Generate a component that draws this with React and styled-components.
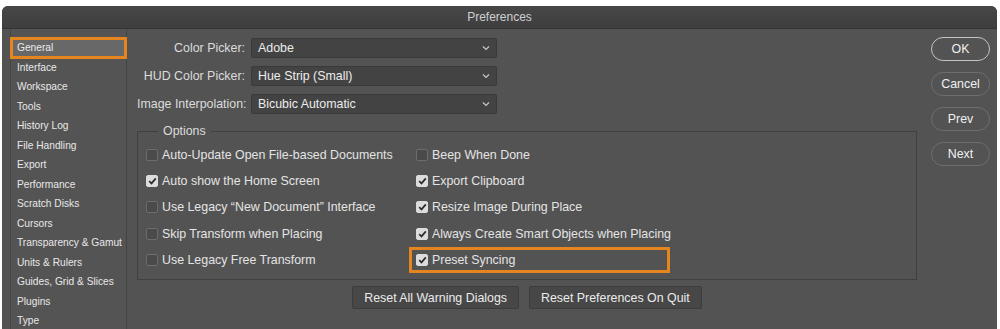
import React from 'react';
import styled, { createGlobalStyle } from 'styled-components';

const GlobalStyle = createGlobalStyle`
  html, body {
    margin: 0;
    padding: 0;
    background: #ffffff;
    font-family: 'Liberation Sans', Arial, sans-serif;
  }
`;

const ORANGE = '#e4861d';

/** 창 전체 — 상단 흰 여백 아래 둥근 다크 패널 */
const Window = styled.div`
  margin: 6px 3px 0 2px;
  height: 323px;
  background: #535353;
  border-radius: 6px 6px 0 0;
  display: flex;
  flex-direction: column;
  overflow: hidden;
  color: #e2e2e2;
`;

const TitleBar = styled.div`
  height: 22px;
  flex: none;
  background: linear-gradient(#474747, #3e3e3e);
  border-bottom: 1px solid #343434;
  display: flex;
  align-items: center;
  justify-content: center;
  font-size: 12px;
  color: #cfcfcf;
`;

const Body = styled.div`
  flex: 1;
  display: flex;
  min-height: 0;
`;

/** 왼쪽 카테고리 목록 */
const Sidebar = styled.ul`
  list-style: none;
  margin: 0 0 0 8px;
  padding: 9px 0 0 0;
  width: 117px;
  flex: none;
  border-left: 1px solid #464646;
  border-right: 1px solid #444444;
  box-sizing: border-box;
  background: #545454;
`;

const SideItem = styled.li`
  position: relative;
  height: 19.5px;
  line-height: 19.5px;
  padding-left: 6px;
  font-size: 10.2px;
  color: #e8e8e8;
  white-space: nowrap;
  background: ${({ $active }) => ($active ? '#686868' : 'transparent')};
  ${({ $active }) =>
    $active &&
    `
    &::after {
      content: '';
      position: absolute;
      left: -1px;
      right: -1px;
      top: -1px;
      bottom: -1px;
      border: 3px solid ${ORANGE};
    }
  `}
`;

const Main = styled.div`
  width: 789px;
  flex: none;
  padding: 9px 0 0 10px;
  box-sizing: border-box;
  display: flex;
  flex-direction: column;
`;

const FieldRows = styled.div`
  display: flex;
  flex-direction: column;
  gap: 8px;
`;

const FieldRow = styled.div`
  display: flex;
  align-items: center;
  height: 20px;
`;

const FieldLabel = styled.span`
  width: 108px;
  text-align: right;
  font-size: 12.4px;
  color: #dcdcdc;
  white-space: nowrap;
  margin-right: 6px;
`;

const Select = styled.div`
  width: 246px;
  height: 20px;
  box-sizing: border-box;
  background: #434343;
  border: 1px solid #3a3a3a;
  border-radius: 2px;
  display: flex;
  align-items: center;
  justify-content: space-between;
  padding: 0 6px 0 6px;
  font-size: 12.4px;
  color: #ececec;
`;

const Chevron = () => (
  <svg width="8" height="6" viewBox="0 0 8 6">
    <path d="M1 1.5 L4 4.5 L7 1.5" fill="none" stroke="#c8c8c8" strokeWidth="1.2" />
  </svg>
);

const Group = styled.fieldset`
  margin: 10px 0 0 0;
  width: 780px;
  height: 156px;
  box-sizing: border-box;
  border: 1px solid #404040;
  padding: 4px 0 0 8px;
  display: grid;
  grid-template-columns: 270px 1fr;
  grid-auto-flow: column;
  grid-template-rows: repeat(5, 26.2px);
  align-content: start;
`;

const Legend = styled.legend`
  margin-left: 12px;
  padding: 0 5px;
  font-size: 12.4px;
  color: #dcdcdc;
`;

const Option = styled.label`
  position: relative;
  display: flex;
  align-items: center;
  gap: 4px;
  font-size: 12.4px;
  color: #e4e4e4;
  white-space: nowrap;
  ${({ $highlight }) =>
    $highlight &&
    `
    &::after {
      content: '';
      position: absolute;
      left: -7px;
      top: 0px;
      width: 261px;
      height: 26px;
      box-sizing: border-box;
      border: 3px solid ${ORANGE};
    }
  `}
`;

const Box = styled.span`
  width: 12px;
  height: 12px;
  box-sizing: border-box;
  border-radius: 2px;
  flex: none;
  display: flex;
  align-items: center;
  justify-content: center;
  background: ${({ $checked }) => ($checked ? '#dcdcdc' : '#4a4a4a')};
  border: 1px solid ${({ $checked }) => ($checked ? '#dcdcdc' : '#6c6c6c')};
`;

const Check = () => (
  <svg width="9" height="8" viewBox="0 0 9 8">
    <path d="M1.2 4.2 L3.5 6.4 L7.8 1.4" fill="none" stroke="#2c2c2c" strokeWidth="1.7" />
  </svg>
);

const BottomBar = styled.div`
  width: 780px;
  display: flex;
  justify-content: center;
  gap: 10px;
  margin-top: 6px;
`;

const FlatButton = styled.button`
  height: 23px;
  padding: 0 11px;
  background: #474747;
  border: 1px solid #3c3c3c;
  border-radius: 2px;
  font-family: inherit;
  font-size: 12.4px;
  color: #ebebeb;
`;

const ButtonColumn = styled.div`
  flex: none;
  display: flex;
  flex-direction: column;
  gap: 11px;
  padding: 8px 0 0 15px;
`;

const PillButton = styled.button`
  width: 59px;
  height: 24px;
  border-radius: 12px;
  background: transparent;
  border: 1px solid ${({ $primary }) => ($primary ? '#c4c4c4' : '#6e6e6e')};
  font-family: inherit;
  font-size: 12.4px;
  color: #f0f0f0;
  padding: 0;
`;

const categories = [
  'General', 'Interface', 'Workspace', 'Tools', 'History Log', 'File Handling',
  'Export', 'Performance', 'Scratch Disks', 'Cursors', 'Transparency & Gamut',
  'Units & Rulers', 'Guides, Grid & Slices', 'Plugins', 'Type',
];

const fields = [
  ['Color Picker:', 'Adobe'],
  ['HUD Color Picker:', 'Hue Strip (Small)'],
  ['Image Interpolation:', 'Bicubic Automatic'],
];

const options = [
  { label: 'Auto-Update Open File-based Documents', checked: false },
  { label: 'Auto show the Home Screen', checked: true },
  { label: 'Use Legacy \u201CNew Document\u201D Interface', checked: false },
  { label: 'Skip Transform when Placing', checked: false },
  { label: 'Use Legacy Free Transform', checked: false },
  { label: 'Beep When Done', checked: false },
  { label: 'Export Clipboard', checked: true },
  { label: 'Resize Image During Place', checked: true },
  { label: 'Always Create Smart Objects when Placing', checked: true },
  { label: 'Preset Syncing', checked: true, highlight: true },
];

export default function App() {
  return (
    <>
      <GlobalStyle />
      <Window>
        <TitleBar>Preferences</TitleBar>
        <Body>
          <Sidebar>
            {categories.map((c, i) => (
              <SideItem key={c} $active={i === 0}>{c}</SideItem>
            ))}
          </Sidebar>
          <Main>
            <FieldRows>
              {fields.map(([label, value]) => (
                <FieldRow key={label}>
                  <FieldLabel>{label}</FieldLabel>
                  <Select>
                    <span>{value}</span>
                    <Chevron />
                  </Select>
                </FieldRow>
              ))}
            </FieldRows>
            <Group>
              <Legend>Options</Legend>
              {options.map((o) => (
                <Option key={o.label} $highlight={o.highlight}>
                  <Box $checked={o.checked}>{o.checked && <Check />}</Box>
                  {o.label}
                </Option>
              ))}
            </Group>
            <BottomBar>
              <FlatButton>Reset All Warning Dialogs</FlatButton>
              <FlatButton>Reset Preferences On Quit</FlatButton>
            </BottomBar>
          </Main>
          <ButtonColumn>
            <PillButton $primary>OK</PillButton>
            <PillButton>Cancel</PillButton>
            <PillButton>Prev</PillButton>
            <PillButton>Next</PillButton>
          </ButtonColumn>
        </Body>
      </Window>
    </>
  );
}
